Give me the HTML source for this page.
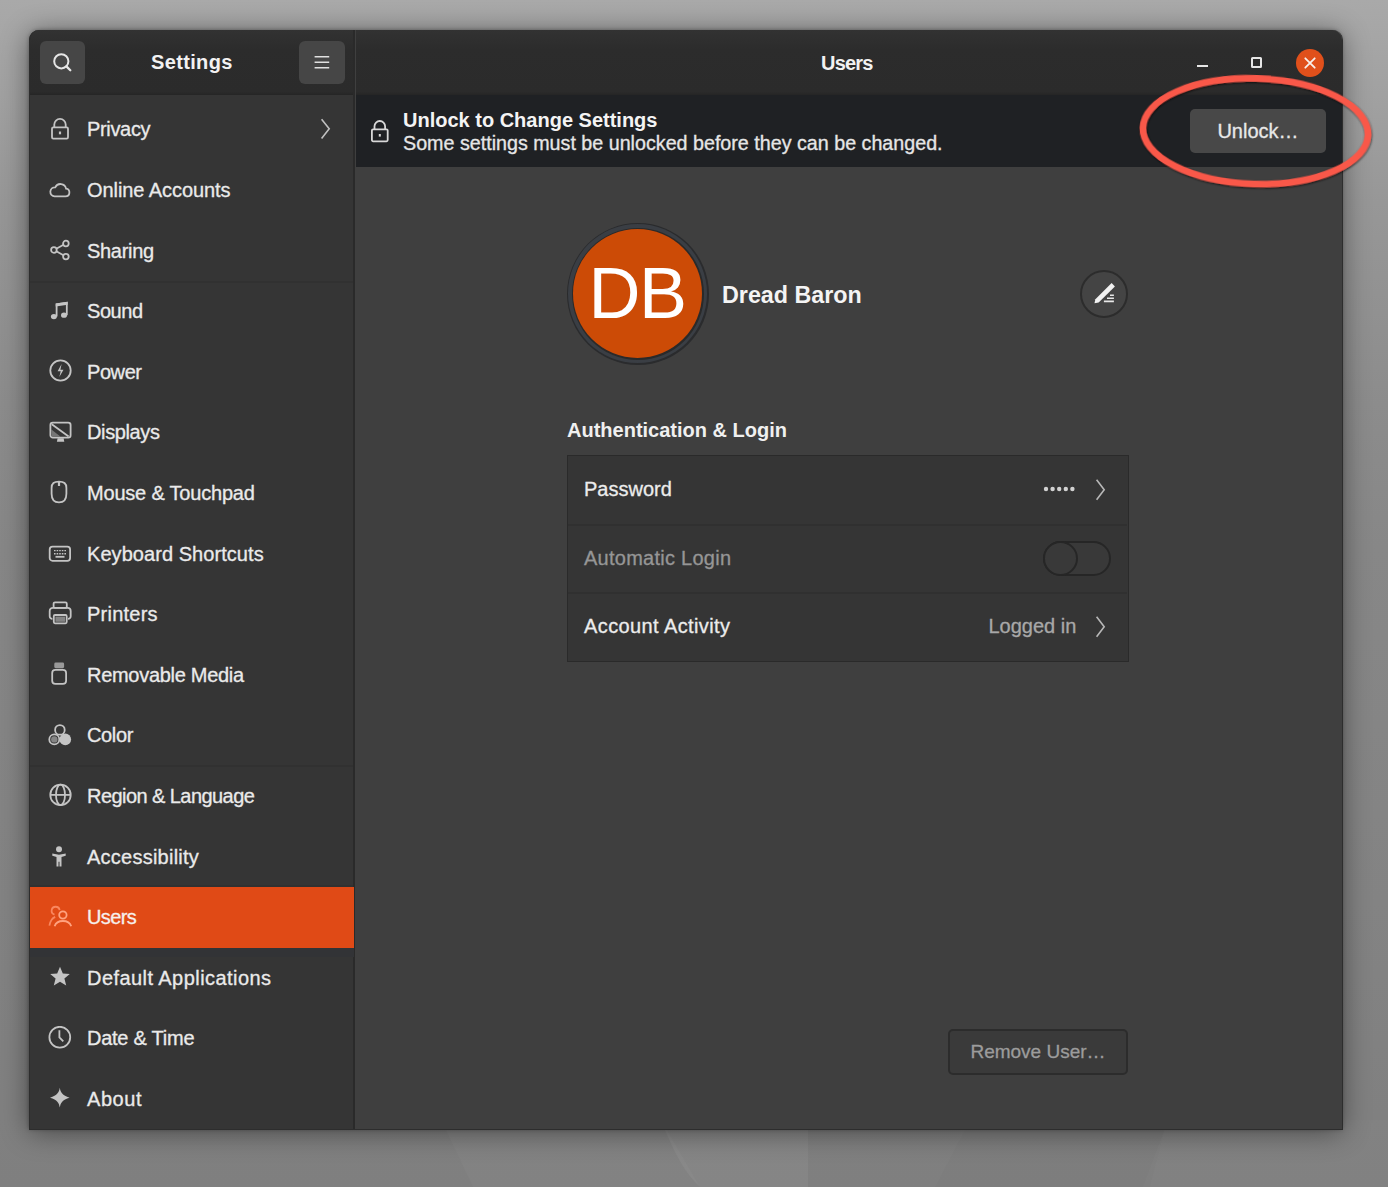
<!DOCTYPE html>
<html><head><meta charset="utf-8">
<style>
*{box-sizing:border-box;margin:0;padding:0}
html,body{width:1388px;height:1187px;overflow:hidden}
body{position:relative;font-family:"Liberation Sans",sans-serif;color:#eeeeee;
background:linear-gradient(180deg,#a9a9a9 0%,#a1a1a1 8%,#979797 17%,#8c8c8c 34%,#878787 46%,#838383 76%,#7f7f7f 100%);}
.a{position:absolute}
#win{position:absolute;left:29px;top:30px;width:1313px;height:1099px;border-radius:10px 10px 0 0;overflow:hidden;
 box-shadow:0 3px 28px rgba(0,0,0,.45),0 0 4px rgba(0,0,0,.35);background:#3f3f3f}
#hl{left:0;top:0;width:325px;height:65px;background:linear-gradient(#323232,#2c2c2c 30%,#2b2b2b 95%,#252525)}
#hr{left:327px;top:0;width:986px;height:65px;background:linear-gradient(#323232,#2c2c2c 30%,#2b2b2b 95%,#252525)}
#div{left:323.5px;top:0;width:2.5px;height:1100px;background:#2a2a2a}
#side{left:0;top:65px;width:325px;height:1035px;background:#353535}
#cont{left:327px;top:65px;width:986px;height:1035px;background:#3f3f3f}
.hbtn{position:absolute;width:45px;height:43px;border-radius:6px;background:#464646}
.title{position:absolute;font-weight:bold;font-size:20px;line-height:24px;color:#f2f2f2}
.row{position:absolute;left:0;width:325px;height:60.6px;}
.row .t{position:absolute;left:58px;top:0;line-height:60.6px;font-size:20px;color:#eaeaea;white-space:nowrap}
.row svg{position:absolute;left:19px;top:19px}
.sep{position:absolute;left:0;width:325px;height:2px;background:#303030}
#info{left:327px;top:65px;width:986px;height:72px;background:#1f2124}
.st{position:absolute;left:87px;height:60.6px;line-height:62.6px;font-size:20px;white-space:nowrap}
.lt{font-size:20px;line-height:24px;white-space:nowrap}
.st,.lt,.rg{-webkit-text-stroke:0.3px currentColor}
</style></head><body>
<!-- wallpaper -->
<svg class="a" style="left:0;top:1120px" width="1388" height="67" viewBox="0 1120 1388 67">
<path d="M441 1120L473 1187H700L661 1120z" fill="#fff" opacity=".025"/>
<path d="M661 1120Q680 1170 700 1187H808V1120z" fill="#fff" opacity=".05"/>
<path d="M970 1120L935 1187H1150L1167 1120z" fill="#000" opacity=".015"/>
<path d="M1168 1120L1143 1187H1388V1120z" fill="#fff" opacity=".02"/>
</svg>
<div id="win">
 <div id="hl" class="a"></div>
 <div id="hr" class="a"></div>
 <div id="side" class="a"></div>
 <div id="cont" class="a"></div>
 <div id="div" class="a"></div>
 <div id="info" class="a"></div>
</div>

<!-- header left -->
<div class="hbtn" style="left:40px;top:41px"></div>
<svg class="a" style="left:50px;top:51px" width="24" height="24" viewBox="0 0 24 24"><circle cx="11.3" cy="10.3" r="7.1" fill="none" stroke="#e6e6e6" stroke-width="2"/><path d="M16.4 15.4l3.9 3.9" stroke="#e6e6e6" stroke-width="2.3" stroke-linecap="round"/></svg>
<div class="title" style="left:151px;top:50px;letter-spacing:0.35px">Settings</div>
<div class="hbtn" style="left:299px;top:41px;width:46px"></div>
<svg class="a" style="left:310px;top:51px" width="24" height="24" viewBox="0 0 24 24"><path d="M4.6 5.7h14.6M4.6 11.2h14.6M4.6 16.7h14.6" stroke="#e0e0e0" stroke-width="1.6"/></svg>

<!-- header right -->
<div class="title" style="left:821px;top:50.5px;letter-spacing:-0.8px">Users</div>

<!-- sidebar -->
<div class="a" style="left:29px;top:280.5px;width:324px;height:2px;background:#313131"></div>
<div class="a" style="left:29px;top:764.5px;width:324px;height:2px;background:#313131"></div>
<div class="a" style="left:29px;top:885px;width:324px;height:2px;background:#313131"></div>
<div class="a" style="left:29px;top:947px;width:325px;height:10px;background:#323336"></div>
<div class="st" style="top:98.3px;color:#eaeaea;letter-spacing:-0.33px">Privacy</div>
<svg class="a" style="left:48px;top:116.6px" width="24" height="24" viewBox="0 0 24 24"><path d="M6.3 10.6V7.6a5.7 5.7 0 0 1 11.4 0v3" stroke="#c4c4c4" stroke-width="1.8" fill="none"/><rect x="4" y="10.4" width="16" height="11.2" rx="1.3" stroke="#c4c4c4" stroke-width="1.8" fill="none"/><rect x="10.9" y="14.5" width="2.2" height="2.8" fill="#c4c4c4"/></svg>
<div class="st" style="top:158.9px;color:#eaeaea;letter-spacing:-0.07px">Online Accounts</div>
<svg class="a" style="left:48px;top:177.2px" width="24" height="24" viewBox="0 0 24 24"><path d="M6.6 19.4h10.8a3.9 3.9 0 0 0 .7-7.75A5.8 5.8 0 0 0 7.2 10.3a4.55 4.55 0 0 0-.6 9.1z" stroke="#c4c4c4" stroke-width="1.8" fill="none"/></svg>
<div class="st" style="top:219.5px;color:#eaeaea;letter-spacing:-0.3px">Sharing</div>
<svg class="a" style="left:48px;top:237.8px" width="24" height="24" viewBox="0 0 24 24"><circle cx="17.9" cy="5.5" r="2.8" stroke="#c4c4c4" stroke-width="1.8" fill="none"/><circle cx="5.9" cy="12" r="2.8" stroke="#c4c4c4" stroke-width="1.8" fill="none"/><circle cx="17.9" cy="18.6" r="2.8" stroke="#c4c4c4" stroke-width="1.8" fill="none"/><path d="M8.3 10.7l7.2-3.9M8.3 13.3l7.2 4" stroke="#c4c4c4" stroke-width="1.8" fill="none"/></svg>
<div class="st" style="top:280.1px;color:#eaeaea;letter-spacing:-0.42px">Sound</div>
<svg class="a" style="left:48px;top:298.4px" width="24" height="24" viewBox="0 0 24 24"><path d="M8.6 18.5V6.3l10.2-1.5v12.4" stroke="#c4c4c4" stroke-width="1.8" fill="none"/><ellipse cx="5.9" cy="18.6" rx="3" ry="2.6" fill="#c4c4c4"/><ellipse cx="16" cy="17.2" rx="3" ry="2.6" fill="#c4c4c4"/><path d="M7.7 5.6l12-1.8v3l-12 1.8z" fill="#c4c4c4"/></svg>
<div class="st" style="top:340.7px;color:#eaeaea;letter-spacing:-0.42px">Power</div>
<svg class="a" style="left:48px;top:359.0px" width="24" height="24" viewBox="0 0 24 24"><circle cx="12.5" cy="11.5" r="10.2" stroke="#c4c4c4" stroke-width="1.8" fill="none"/><path d="M13.6 5l-4 7.2h3.1l-1.4 5.9 4.2-7.4h-3.1z" fill="#c4c4c4"/></svg>
<div class="st" style="top:401.3px;color:#eaeaea;letter-spacing:-0.37px">Displays</div>
<svg class="a" style="left:48px;top:419.6px" width="24" height="24" viewBox="0 0 24 24"><rect x="2.4" y="2.6" width="20.2" height="15" rx="2.4" stroke="#c4c4c4" stroke-width="1.8" fill="none"/><path d="M3.8 4.2l16.8 12.2" stroke="#c4c4c4" stroke-width="1.8" fill="none"/><path d="M3.4 9.4l9 7.2H4z" fill="#c4c4c4" opacity=".45"/><path d="M9.6 18.2h6l.7 3.6H8.9z" fill="#c4c4c4"/></svg>
<div class="st" style="top:461.9px;color:#eaeaea;letter-spacing:-0.2px">Mouse &amp; Touchpad</div>
<svg class="a" style="left:48px;top:480.2px" width="24" height="24" viewBox="0 0 24 24"><path d="M11 1.6c-5 0-7.4 1.5-7.4 6.3v5.8c0 5.6 3 8.6 7.4 8.6s7.4-3 7.4-8.6V7.9c0-4.8-2.4-6.3-7.4-6.3z" stroke="#c4c4c4" stroke-width="1.8" fill="none"/><path d="M11 2v4" stroke="#c4c4c4" stroke-width="2.2"/></svg>
<div class="st" style="top:522.5px;color:#eaeaea;letter-spacing:0.06px">Keyboard Shortcuts</div>
<svg class="a" style="left:48px;top:540.8px" width="24" height="24" viewBox="0 0 24 24"><rect x="1.7" y="5.6" width="20.4" height="14.2" rx="2.8" stroke="#c4c4c4" stroke-width="1.8" fill="none"/><path d="M6 9.6h12M6 12.7h12" stroke="#c4c4c4" stroke-width="1.4" stroke-dasharray="1.6 1"/><path d="M7.5 15.8h9" stroke="#c4c4c4" stroke-width="1.8"/></svg>
<div class="st" style="top:583.1px;color:#eaeaea;letter-spacing:0.23px">Printers</div>
<svg class="a" style="left:48px;top:601.4px" width="24" height="24" viewBox="0 0 24 24"><rect x="5.6" y="1.3" width="13.2" height="5.6" rx="1.4" stroke="#c4c4c4" stroke-width="1.8" fill="none"/><path d="M4.4 17.8a2.6 2.6 0 0 1-2.7-2.6v-5.2a3.2 3.2 0 0 1 3.2-3.2h14.6a3.2 3.2 0 0 1 3.2 3.2v5.2a2.6 2.6 0 0 1-2.7 2.6" stroke="#c4c4c4" stroke-width="1.8" fill="none"/><rect x="5.8" y="14" width="12.9" height="8.3" rx="1.2" stroke="#c4c4c4" stroke-width="1.8" fill="none"/><rect x="7.4" y="15.6" width="9.7" height="5.2" fill="#c4c4c4" opacity=".55"/></svg>
<div class="st" style="top:643.7px;color:#eaeaea;letter-spacing:-0.29px">Removable Media</div>
<svg class="a" style="left:48px;top:662.0px" width="24" height="24" viewBox="0 0 24 24"><rect x="4.2" y="7.9" width="13.9" height="14" rx="3.2" stroke="#c4c4c4" stroke-width="1.8" fill="none"/><rect x="6.3" y="0.6" width="9.8" height="5.6" rx="1.4" fill="#c4c4c4" opacity=".7"/></svg>
<div class="st" style="top:704.3px;color:#eaeaea;letter-spacing:-0.37px">Color</div>
<svg class="a" style="left:48px;top:722.6px" width="24" height="24" viewBox="0 0 24 24"><circle cx="11.9" cy="6.9" r="4.8" stroke="#c4c4c4" stroke-width="1.8" fill="none"/><circle cx="6.3" cy="16.4" r="5" stroke="#c4c4c4" stroke-width="1.8" fill="none"/><circle cx="6.3" cy="16.4" r="3.2" fill="#c4c4c4" opacity=".55"/><circle cx="17.3" cy="16.4" r="5.8" fill="#c4c4c4"/></svg>
<div class="st" style="top:764.9px;color:#eaeaea;letter-spacing:-0.56px">Region &amp; Language</div>
<svg class="a" style="left:48px;top:783.2px" width="24" height="24" viewBox="0 0 24 24"><circle cx="12.5" cy="11.9" r="10.2" stroke="#c4c4c4" stroke-width="1.8" fill="none"/><ellipse cx="12.5" cy="11.9" rx="4.5" ry="10.2" stroke="#c4c4c4" stroke-width="1.8" fill="none"/><path d="M2.3 11.9h20.4" stroke="#c4c4c4" stroke-width="1.8" fill="none"/></svg>
<div class="st" style="top:825.5px;color:#eaeaea;letter-spacing:0.24px">Accessibility</div>
<svg class="a" style="left:48px;top:843.8px" width="24" height="24" viewBox="0 0 24 24"><circle cx="11" cy="5.2" r="3" fill="#c4c4c4"/><path d="M4.3 9.4l6.7 1.4 6.7-1.4v2.4l-4.2 1.1v9.6h-2v-4.7h-1v4.7h-2v-9.6l-4.2-1.1z" fill="#c4c4c4"/></svg>
<div class="a" style="left:30px;top:887px;width:323.5px;height:60.5px;background:#e04a16"></div>
<div class="st" style="top:886.1px;color:#f6f0ec;letter-spacing:-0.6px">Users</div>
<svg class="a" style="left:48px;top:904.4px" width="24" height="24" viewBox="0 0 24 24"><circle cx="14.9" cy="11" r="3.7" stroke="#ffa27f" stroke-width="1.8" fill="none"/><path d="M6.6 22.2c1.2-3.6 4.2-5.2 8.3-5.2s7.1 1.6 8.3 5.2" stroke="#ffa27f" stroke-width="1.8" fill="none"/><path d="M11.6 6.2A4 4 0 1 0 6.5 10.6" stroke="#f9875f" stroke-width="1.8" fill="none"/><path d="M7.2 12.8c-3 1.2-5 4.2-5.8 8.8" stroke="#f9875f" stroke-width="1.8" fill="none"/></svg>
<div class="st" style="top:946.7px;color:#eaeaea;letter-spacing:0.44px">Default Applications</div>
<svg class="a" style="left:48px;top:965.0px" width="24" height="24" viewBox="0 0 24 24"><path d="M12 1.8l2.8 6.6 7 .6-5.4 4.6 1.8 7L12 16.8l-6.2 3.8 1.8-7-5.4-4.6 7-.6z" fill="#c4c4c4"/></svg>
<div class="st" style="top:1007.3px;color:#eaeaea;letter-spacing:-0.25px">Date &amp; Time</div>
<svg class="a" style="left:48px;top:1025.6px" width="24" height="24" viewBox="0 0 24 24"><circle cx="11.8" cy="11.2" r="10.4" stroke="#c4c4c4" stroke-width="1.8" fill="none"/><path d="M11.4 4.3v7.1l3.9 3.9" stroke="#c4c4c4" stroke-width="1.8" fill="none"/></svg>
<div class="st" style="top:1067.9px;color:#eaeaea;letter-spacing:0.57px">About</div>
<svg class="a" style="left:48px;top:1086.2px" width="24" height="24" viewBox="0 0 24 24"><path d="M11.8 1.8c.8 4.6 2.4 7.6 9.8 9.9-7.4 2.1-9 5.1-9.8 9.9-.8-4.8-2.4-7.8-9.8-9.9 7.4-2.3 9-5.3 9.8-9.9z" fill="#c4c4c4"/></svg>
<!-- content -->
<!-- frame -->
<div class="a" style="left:28.5px;top:30px;width:1314px;height:1099.5px;border:1.5px solid #2d2d2d;border-top:none;border-radius:10px 10px 0 0;pointer-events:none;z-index:5"></div>

<!-- window controls -->
<div class="a" style="left:1197px;top:65px;width:11px;height:2px;background:#e6e6e6"></div>
<div class="a" style="left:1251px;top:57px;width:11px;height:11px;border:2px solid #e6e6e6;border-radius:1.5px"></div>
<div class="a" style="left:1296px;top:49px;width:28px;height:28px;border-radius:50%;background:#e0501b"></div>
<svg class="a" style="left:1296px;top:49px" width="28" height="28" viewBox="0 0 28 28"><path d="M9.3 9.3l9.4 9.4M18.7 9.3l-9.4 9.4" stroke="#f8f0ec" stroke-width="1.8" stroke-linecap="round"/></svg>

<!-- privacy chevron -->
<svg class="a" style="left:316px;top:117px" width="16" height="24" viewBox="0 0 16 24"><path d="M5.6 2.2l7.6 9.6-7.6 9.6" stroke="#c0c0c0" stroke-width="1.6" fill="none"/></svg>

<!-- infobar -->
<svg class="a" style="left:368px;top:119px" width="24" height="24" viewBox="0 0 24 24"><path d="M6.5 10.2V7.3a5.3 5.3 0 0 1 10.6 0v2.9" stroke="#d8d8d8" stroke-width="1.8" fill="none"/><rect x="3.9" y="10.3" width="15.8" height="12" rx="1.2" stroke="#d8d8d8" stroke-width="1.8" fill="none"/><rect x="10.8" y="15" width="2" height="2.6" fill="#d8d8d8"/></svg>
<div class="a" style="left:403px;top:108px;font-size:20px;font-weight:bold;line-height:24px;color:#f4f4f4;white-space:nowrap">Unlock to Change Settings</div>
<div class="a rg" style="left:403px;top:131px;font-size:19.7px;line-height:24px;color:#e6e6e6;white-space:nowrap">Some settings must be unlocked before they can be changed.</div>
<div class="a" style="left:1190px;top:109px;width:136px;height:44px;border-radius:5px;background:#484848"></div>
<div class="a rg" style="left:1190px;top:109px;width:136px;height:44px;line-height:44px;text-align:center;font-size:20px;color:#e8e8e8">Unlock…</div>

<!-- avatar -->
<div class="a" style="left:566.5px;top:222.5px;width:142px;height:142px;border-radius:50%;background:#2a2b2d"></div>
<div class="a" style="left:568px;top:224px;width:139px;height:139px;border-radius:50%;background:#3a3e44"></div>
<div class="a" style="left:571.5px;top:227.5px;width:132px;height:132px;border-radius:50%;background:#2a2a2a"></div>
<div class="a" style="left:573px;top:229px;width:129px;height:129px;border-radius:50%;background:#cc4b06"></div>
<div class="a" style="left:567px;top:223px;width:141px;height:141px;line-height:141px;text-align:center;font-size:72px;color:#ffffff;letter-spacing:-1.5px;text-indent:-1px">DB</div>
<div class="a" style="left:722px;top:280.5px;font-size:23.3px;font-weight:bold;line-height:28px;color:#f4f4f4;white-space:nowrap">Dread Baron</div>
<div class="a" style="left:1080px;top:269.5px;width:48px;height:48px;border-radius:50%;background:#444444;border:2px solid #2c2c2c"></div>
<svg class="a" style="left:1092px;top:282px" width="24" height="24" viewBox="0 0 24 24"><path d="M2.5 21.3L6.65 20.5 22.9 4.5 19.6 1.1 3.35 17.2z" fill="#f2f2f2"/><path d="M11.9 18.6h10v1.7h-10zM15 15.4h6.9v1.5H15zM18 12.6h3.9v1.4H18z" fill="#e8e8e8"/></svg>

<!-- auth -->
<div class="a" style="left:567px;top:418px;font-size:20px;font-weight:bold;line-height:24px;color:#f0f0f0;white-space:nowrap">Authentication &amp; Login</div>
<div class="a" style="left:566.5px;top:454.5px;width:562.5px;height:207px;background:#353535;border:1.6px solid #2a2a2a"></div>
<div class="a" style="left:568px;top:524px;width:559px;height:1.5px;background:#303030"></div>
<div class="a" style="left:568px;top:592px;width:559px;height:1.5px;background:#303030"></div>
<div class="a lt" style="left:584px;top:477px;color:#ececec">Password</div>
<div class="a lt" style="left:584px;top:546px;color:#969696;letter-spacing:0.26px">Automatic Login</div>
<div class="a lt" style="left:584px;top:614px;color:#ececec;letter-spacing:0.4px">Account Activity</div>
<svg class="a" style="left:1041px;top:481px" width="40" height="16" viewBox="0 0 40 16"><g fill="#d2d2d2"><circle cx="5" cy="8" r="2.2"/><circle cx="11.6" cy="8" r="2.2"/><circle cx="18.2" cy="8" r="2.2"/><circle cx="24.8" cy="8" r="2.2"/><circle cx="31.4" cy="8" r="2.2"/></g></svg>
<svg class="a" style="left:1092px;top:478px" width="16" height="24" viewBox="0 0 16 24"><path d="M4.6 1.8l7.6 10-7.6 10" stroke="#b8b8b8" stroke-width="1.6" fill="none"/></svg>
<svg class="a" style="left:1092px;top:615px" width="16" height="24" viewBox="0 0 16 24"><path d="M4.6 1.8l7.6 10-7.6 10" stroke="#b8b8b8" stroke-width="1.6" fill="none"/></svg>
<div class="a lt" style="left:988.5px;top:614px;color:#a8a8a8">Logged in</div>
<div class="a" style="left:1043px;top:541px;width:68px;height:35px;border-radius:18px;background:#393939;border:2px solid #262626"></div>
<div class="a" style="left:1043px;top:541px;width:35px;height:35px;border-radius:50%;background:#393939;border:2px solid #262626"></div>

<!-- remove user -->
<div class="a" style="left:948px;top:1029px;width:180px;height:46px;border-radius:5px;background:#3a3a3a;border:2px solid #2c2c2c"></div>
<div class="a rg" style="left:948px;top:1029px;width:180px;height:46px;line-height:46px;text-align:center;font-size:19px;color:#9c9c9c">Remove User…</div>

<!-- red annotation ellipse -->
<svg class="a" style="left:1130px;top:68px;z-index:10;overflow:visible" width="250" height="126" viewBox="0 0 250 126"><defs><filter id="sh" x="-10%" y="-20%" width="120%" height="140%"><feDropShadow dx="0.5" dy="1" stdDeviation="1" flood-color="#000" flood-opacity=".75"/></filter></defs><ellipse cx="125.5" cy="63.2" rx="112.6" ry="52.8" transform="rotate(1.8 125.5 63.2)" fill="none" stroke="#f9584a" stroke-width="6.6" filter="url(#sh)"/></svg>

</body></html>
